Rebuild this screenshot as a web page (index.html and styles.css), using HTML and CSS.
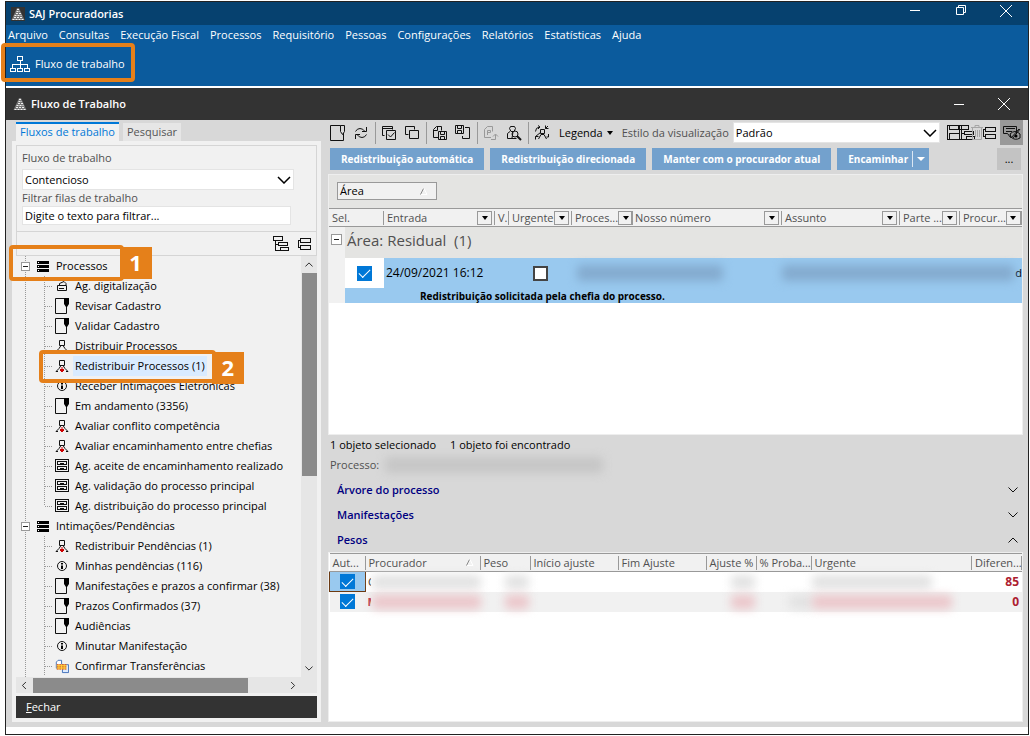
FILE: index.html
```html
<!DOCTYPE html>
<html lang="pt-BR">
<head>
<meta charset="utf-8">
<title>SAJ Procuradorias</title>
<link rel="stylesheet" href="styles.css">
</head>
<body>
<svg class="sprite" aria-hidden="true">
  <symbol id="logo" viewBox="0 0 14 14"><path fill="#333" d="M0 0h14v14H0z"/><path fill="#777" d="M6 1h2l5.500 12H.5z"/><path stroke="#f0f0f0" stroke-dasharray="2 1" d="M6 2.500h2M5.500 4.500h3.500M5 6.500h5M3.500 8.500h7M3 10.500h9M1.500 12.500h12"/></symbol>
  <symbol id="org" viewBox="0 0 20 17"><g fill="none" stroke="#fff" shape-rendering="crispEdges"><path d="M7.500.5h5v4h-5zM.5 12.500h5v3h-5zM7.500 12.500h5v3h-5zM14.500 12.500h5v3h-5zM10.500 5v7M2.500 12V8.500h15V12"/></g></symbol>
  <symbol id="doc" viewBox="0 0 16 16"><path fill="none" stroke="#111" d="M10.500.5h-10v15h13V8M10.500.5h4v6l-2 3-2-3z"/></symbol>
  <symbol id="refresh" viewBox="0 0 16 16"><path fill="none" stroke="#111" d="M2.500 6.500Q4 3.500 7 3.500q3 0 5 3M13.500 2v4.500H9M13.500 9.500Q12 12.500 9 12.500q-3 0-5-3M2.500 14V9.500H7"/></symbol>
  <symbol id="copycheck" viewBox="0 0 16 16"><path fill="none" stroke="#111" d="M3.500 10.500h-2v-9h10v3M5.500 5.500h9v9h-9zM1 3.500h10M7 9.500l2.500 2.500 4-4.500"/></symbol>
  <symbol id="copy" viewBox="0 0 16 16"><path fill="none" stroke="#111" d="M4.500 9.500h-3v-8h9v3M5.500 5.500h9v8h-9z"/></symbol>
  <symbol id="savedoc" viewBox="0 0 16 16"><path fill="none" stroke="#111" d="M6 12.500H1.500v-8l3-3h5v4M1.500 5.500h4v-4M6.500 6.500h8v8h-8zM8.500 6.500v3h4v-3M8.500 14.500v-3h4v3"/></symbol>
  <symbol id="savesplit" viewBox="0 0 16 16"><path fill="none" stroke="#111" d="M.5.500h8v8h-8zM2.500.500v3h4v-3M2.500 8.500v-3h4v3M10 2.500h4.500v11h-7V11"/></symbol>
  <symbol id="page" viewBox="0 0 16 16"><path fill="none" stroke="#999" d="M8 12.500H1.500v-8l3-3h5v5M4.500 10V5.500h3v2h-3M8 14.500h4.500v-5M10 11.500l2.500-2.500 2.500 2.500"/></symbol>
  <symbol id="finder" viewBox="0 0 16 16"><path fill="none" stroke="#111" d="M4.500 1.500h4l1 2-1.500 3h-3l-1.500-3zM4 6.500l-2.500 2v5h9M7 7l-1 6"/><circle cx="9" cy="9" r="3" fill="none" stroke="#111"/><path stroke="#111" stroke-width="2" d="M11 11l4 4"/></symbol>
  <symbol id="swap" viewBox="0 0 16 16"><path fill="none" stroke="#111" d="M1.500 6.500q0-4 4-4.500M4 .5l2 1.500-2 2M14.500 3.500h-3V.5M11.500 3.500L14 1M6.500 4.500h4v4h-4zM4.500 14l2.500-4.500h3l2.500 4.500M1.500 14.500v-3h3M1.500 11.500l5-4M14.500 9v3h-2"/></symbol>
  <symbol id="tree" viewBox="0 0 16 16"><path fill="none" stroke="#111" shape-rendering="crispEdges" d="M.5.500h9v4h-9zM2.500 5v9H7M2.500 8.500H5M5.500 6.500h9v3h-9zM7.500 11.500h8v3h-8z"/></symbol>
  <symbol id="collapse" viewBox="0 0 13 12"><path fill="none" stroke="#111" shape-rendering="crispEdges" d="M2.500.500h10v4h-10zM2.500 7.500h10v4h-10zM2 2.500H.5v7H2"/></symbol>
  <symbol id="panel" viewBox="0 0 16 16"><path fill="none" stroke="#111" shape-rendering="crispEdges" d="M.5.500h14v14H.5zM2.500.500v4h9V.5M2.500 14V8.500h10V14M12 .5V14"/></symbol>
  <symbol id="trash" viewBox="0 0 12 16"><path fill="none" stroke="#a5a5a5" d="M0 2.500h12M4 2V.5h4V2M1.500 3v11.500h9V3M4.500 5v7M6.500 5v7M8.500 5v7"/></symbol>
  <symbol id="comment" viewBox="0 0 18 16"><path fill="none" stroke="#111" d="M.5 1.500h13v7M.5 1.500v7h4l3 4v-3M3 3.500h9M3 6.500h6M7 9q5-5 10 0v4q-5 3-9-1zM8 13l8-9M17 4l-7 9"/><circle cx="13" cy="11" r="1.500"/></symbol>
  <symbol id="server" viewBox="0 0 12 11"><path fill="#000" d="M0 0h12v3H0zM0 4h12v3H0zM0 8h12v3H0z"/><path fill="#fff" d="M1 1h1v1H1zM1 5h1v1H1zM1 9h1v1H1z"/></symbol>
  <symbol id="scan" viewBox="0 0 14 16"><path fill="none" stroke="#111" d="M2.500 7.500v5h9v-5zM4.500 7V5.500L9 3.500l2 2V7M4 10.500h5"/></symbol>
  <symbol id="tag" viewBox="0 0 14 16"><path fill="none" stroke="#111" d="M9 .5H.5v15h11V9"/><path d="M9 0h5v6l-2 3h-1L9 6z"/></symbol>
  <symbol id="person" viewBox="0 0 14 16"><path fill="none" stroke="#111" d="M4.500 2.500h5v5h-5zM6 7.500l-2 3-3 3M8 7.500l2 3 3 3M1 13.500h2M11 13.500h2"/></symbol>
  <symbol id="personred" viewBox="0 0 14 16"><use href="#person"/><path fill="#c00" d="M6.500 9h1v2H9v2H8v1H6v-1H5v-2h1.500z"/></symbol>
  <symbol id="info" viewBox="0 0 14 16"><circle cx="7" cy="8" r="4.500" fill="none" stroke="#111"/><path d="M6 5h2v1.500H6zM6 7.500h2V11H6z"/></symbol>
  <symbol id="drawer" viewBox="0 0 14 16"><path fill="none" stroke="#111" shape-rendering="crispEdges" d="M.5 1.500h13v12H.5zM2.500 3.500h9v3h-9zM2.500 8.500h9v3h-9zM5 5.500h4M5 10.500h4"/></symbol>
  <symbol id="transfer" viewBox="0 0 16 16"><path fill="#fff" stroke="#3567b5" d="M1.500 3.500l2-2h4v9h-6z"/><path fill="#dceaff" stroke="#3567b5" d="M8.500 6.500h7v9h-7z"/><path fill="#ffd83a" d="M2 6h11v6H2z"/><path stroke="#c33" stroke-dasharray="2 1" d="M2 6.500h11M2 9h11M2 11.500h11"/></symbol>
  <symbol id="chevron" viewBox="0 0 14 8"><path fill="none" stroke="currentColor" stroke-width="1.500" d="M1 1l6 6 6-6"/></symbol>
  <symbol id="thin" viewBox="0 0 10 6"><path fill="none" stroke="currentColor" d="M.5.500L5 5 9.500.500"/></symbol>
  <symbol id="close" viewBox="0 0 12 12"><path stroke="#fff" d="M0 0l12 12M12 0L0 12"/></symbol>
  <symbol id="sort" viewBox="0 0 8 7"><path stroke="#888" d="M.5 6.500l3-6"/><path fill="none" stroke="#fff" d="M4 .5l3 6H1"/></symbol>
</svg>

<div class="app">
  <header class="titlebar">
    <svg class="logo"><use href="#logo"/></svg>
    <h1>SAJ Procuradorias</h1>
    <div class="winbtns">
      <button class="winbtn" aria-label="Minimizar"><span class="dash"></span></button>
      <button class="winbtn" aria-label="Restaurar"><svg width="11" height="11" viewBox="0 0 11 11"><path fill="none" stroke="#fff" d="M.5 2.500h7v7h-7zM2.500 2V.5h7v7H8"/></svg></button>
      <button class="winbtn" aria-label="Fechar"><svg width="12" height="12"><use href="#close"/></svg></button>
    </div>
  </header>
  <nav class="menu">
    <a href="#">Arquivo</a><a href="#">Consultas</a><a href="#">Execução Fiscal</a><a href="#">Processos</a><a href="#">Requisitório</a><a href="#">Pessoas</a><a href="#">Configurações</a><a href="#">Relatórios</a><a href="#">Estatísticas</a><a href="#">Ajuda</a>
  </nav>
  <div class="ribbon">
    <button class="flow callout-host"><svg width="20" height="17"><use href="#org"/></svg>Fluxo de trabalho<span class="callout wide"></span></button>
  </div>

  <section class="window">
    <header class="titlebar dark">
      <svg class="logo"><use href="#logo"/></svg>
      <h2>Fluxo de Trabalho</h2>
      <div class="winbtns">
        <button class="winbtn" aria-label="Minimizar"><span class="dash"></span></button>
        <button class="winbtn" aria-label="Fechar"><svg width="12" height="12"><use href="#close"/></svg></button>
      </div>
    </header>
    <div class="body">
      <aside class="side">
        <div class="tabs"><button class="tab active">Fluxos de trabalho</button><button class="tab">Pesquisar</button></div>
        <div class="sidebox">
          <form class="filters">
            <label class="first" for="fluxo">Fluxo de trabalho</label>
            <div class="combo"><select id="fluxo"><option>Contencioso</option></select><svg width="14" height="8"><use href="#chevron"/></svg></div>
            <label for="filtro">Filtrar filas de trabalho</label>
            <input id="filtro" type="text" value="Digite o texto para filtrar...">
          </form>
          <div class="treetools">
            <button aria-label="Expandir"><svg width="16" height="16"><use href="#tree"/></svg></button>
            <button aria-label="Recolher"><svg width="13" height="12"><use href="#collapse"/></svg></button>
          </div>
          <div class="treewrap">
            <ul class="tree">
              <li>
                <div class="node group callout-host"><button class="toggle" aria-label="Recolher Processos"></button><svg width="12" height="11"><use href="#server"/></svg><span>Processos</span><span class="callout one"><b>1</b></span></div>
                <ul class="children">
                  <li class="node"><svg width="14" height="16"><use href="#scan"/></svg><span>Ag. digitalização</span></li>
                  <li class="node"><svg width="14" height="16"><use href="#tag"/></svg><span>Revisar Cadastro</span></li>
                  <li class="node"><svg width="14" height="16"><use href="#tag"/></svg><span>Validar Cadastro</span></li>
                  <li class="node"><svg width="14" height="16"><use href="#person"/></svg><span>Distribuir Processos</span></li>
                  <li class="node callout-host"><svg width="14" height="16"><use href="#personred"/></svg><span class="selected">Redistribuir Processos (1)</span><span class="callout two"><b>2</b></span></li>
                  <li class="node"><svg width="14" height="16"><use href="#info"/></svg><span>Receber Intimações Eletrônicas</span></li>
                  <li class="node"><svg width="14" height="16"><use href="#tag"/></svg><span>Em andamento (3356)</span></li>
                  <li class="node"><svg width="14" height="16"><use href="#personred"/></svg><span>Avaliar conflito competência</span></li>
                  <li class="node"><svg width="14" height="16"><use href="#personred"/></svg><span>Avaliar encaminhamento entre chefias</span></li>
                  <li class="node"><svg width="14" height="16"><use href="#drawer"/></svg><span>Ag. aceite de encaminhamento realizado</span></li>
                  <li class="node"><svg width="14" height="16"><use href="#drawer"/></svg><span>Ag. validação do processo principal</span></li>
                  <li class="node"><svg width="14" height="16"><use href="#drawer"/></svg><span>Ag. distribuição do processo principal</span></li>
                </ul>
              </li>
              <li>
                <div class="node group"><button class="toggle" aria-label="Recolher Intimações"></button><svg width="12" height="11"><use href="#server"/></svg><span>Intimações/Pendências</span></div>
                <ul class="children open">
                  <li class="node"><svg width="14" height="16"><use href="#personred"/></svg><span>Redistribuir Pendências (1)</span></li>
                  <li class="node"><svg width="14" height="16"><use href="#info"/></svg><span>Minhas pendências (116)</span></li>
                  <li class="node"><svg width="14" height="16"><use href="#tag"/></svg><span>Manifestações e prazos a confirmar (38)</span></li>
                  <li class="node"><svg width="14" height="16"><use href="#tag"/></svg><span>Prazos Confirmados (37)</span></li>
                  <li class="node"><svg width="14" height="16"><use href="#tag"/></svg><span>Audiências</span></li>
                  <li class="node"><svg width="14" height="16"><use href="#info"/></svg><span>Minutar Manifestação</span></li>
                  <li class="node"><svg width="14" height="16"><use href="#transfer"/></svg><span>Confirmar Transferências</span></li>
                </ul>
              </li>
            </ul>
            <div class="vbar"><svg class="up" width="8" height="5"><use href="#thin"/></svg><span class="vthumb"></span><svg width="8" height="5"><use href="#thin"/></svg></div>
          </div>
          <div class="hbar"><svg class="left" width="8" height="5"><use href="#thin"/></svg><span class="hthumb"></span><svg class="right" width="8" height="5"><use href="#thin"/></svg></div>
          <button class="closebtn"><u>F</u>echar</button>
        </div>
      </aside>

      <main class="main">
        <div class="tools">
          <button aria-label="Abrir"><svg width="16" height="16"><use href="#doc"/></svg></button>
          <button aria-label="Atualizar"><svg width="16" height="16"><use href="#refresh"/></svg></button>
          <i class="sep"></i>
          <button aria-label="Marcar todos"><svg width="16" height="16"><use href="#copycheck"/></svg></button>
          <button aria-label="Desmarcar todos"><svg width="16" height="16"><use href="#copy"/></svg></button>
          <i class="sep"></i>
          <button aria-label="Salvar documento"><svg width="16" height="16"><use href="#savedoc"/></svg></button>
          <button aria-label="Salvar lista"><svg width="16" height="16"><use href="#savesplit"/></svg></button>
          <i class="sep"></i>
          <button aria-label="Peticionar"><svg width="16" height="16"><use href="#page"/></svg></button>
          <button aria-label="Consultar pessoa"><svg width="16" height="16"><use href="#finder"/></svg></button>
          <i class="sep"></i>
          <button aria-label="Trocar responsável"><svg width="16" height="16"><use href="#swap"/></svg></button>
          <button class="legend">Legenda<i class="caret"></i></button>
          <label for="estilo">Estilo da visualização</label>
          <div class="combo style"><select id="estilo"><option>Padrão</option></select><svg width="14" height="8"><use href="#chevron"/></svg></div>
          <div class="viewtools">
            <button aria-label="Painel"><svg width="16" height="16"><use href="#panel"/></svg></button>
            <button class="lap" aria-label="Expandir"><svg width="16" height="16"><use href="#tree"/></svg></button>
            <button class="lap" aria-label="Excluir"><svg width="12" height="16"><use href="#trash"/></svg></button>
            <button aria-label="Recolher"><svg width="13" height="12"><use href="#collapse"/></svg></button>
          </div>
          <button class="pressed" aria-label="Observações"><svg width="18" height="16"><use href="#comment"/></svg></button>
        </div>
        <div class="actions">
          <button class="action">Redistribuição automática</button>
          <button class="action">Redistribuição direcionada</button>
          <button class="action">Manter com o procurador atual</button>
          <button class="action split">Encaminhar<i class="bar"></i><i class="caret"></i></button>
          <button class="more" aria-label="Mais">...</button>
        </div>

        <div class="grid">
          <div class="groupby"><button class="chip">Área<svg width="8" height="7"><use href="#sort"/></svg></button></div>
          <table>
            <colgroup><col class="w54"><col class="w111"><col class="w14"><col class="w63"><col class="w60"><col class="wide-col"><col class="w118"><col class="w60"><col class="w61"></colgroup>
            <thead><tr>
              <th><div>Sel.</div></th>
              <th><div>Entrada<button aria-label="Filtrar"><i class="caret"></i></button></div></th>
              <th><div>V.</div></th>
              <th><div>Urgente<button aria-label="Filtrar"><i class="caret"></i></button></div></th>
              <th><div>Proces...<button aria-label="Filtrar"><i class="caret"></i></button></div></th>
              <th><div>Nosso número<button aria-label="Filtrar"><i class="caret"></i></button></div></th>
              <th><div>Assunto<button aria-label="Filtrar"><i class="caret"></i></button></div></th>
              <th><div>Parte ...<button aria-label="Filtrar"><i class="caret"></i></button></div></th>
              <th><div>Procur...<button aria-label="Filtrar"><i class="caret"></i></button></div></th>
            </tr></thead>
            <tbody>
              <tr class="grouprow"><td colspan="9"><div><button class="toggle big" aria-label="Recolher grupo"></button><span>Área: Residual&nbsp; (1)</span></div></td></tr>
              <tr class="sel">
                <td class="tick"><div><input type="checkbox" checked aria-label="Selecionar"></div></td>
                <td class="date">24/09/2021 16:12</td><td></td>
                <td class="urg"><input type="checkbox" aria-label="Urgente"></td>
                <td colspan="2"><span class="smudge blue s150"></span></td>
                <td colspan="3"><div class="masked"><span class="smudge blue"></span>d</div></td>
              </tr>
              <tr class="note"><td class="indent"><div></div></td><td colspan="8">Redistribuição solicitada pela chefia do processo.</td></tr>
            </tbody>
          </table>
        </div>

        <div class="status"><span>1 objeto selecionado</span><span>1 objeto foi encontrado</span></div>
        <div class="process">Processo:<span class="smudge grey"></span></div>
        <div class="sections">
          <button>Árvore do processo<svg width="10" height="6"><use href="#thin"/></svg></button>
          <button>Manifestações<svg width="10" height="6"><use href="#thin"/></svg></button>
          <button>Pesos<svg class="up" width="10" height="6"><use href="#thin"/></svg></button>
        </div>
        <div class="grid weights">
          <table>
            <colgroup><col class="w35"><col class="w115"><col class="w50"><col class="w88"><col class="w88"><col class="w50"><col class="w54"><col class="wide-col"><col class="w50"></colgroup>
            <thead><tr>
              <th><div>Aut...</div></th><th><div>Procurador<svg width="8" height="7"><use href="#sort"/></svg></div></th><th><div>Peso</div></th><th><div>Início ajuste</div></th><th><div>Fim Ajuste</div></th><th><div>Ajuste %</div></th><th><div>% Proba...</div></th><th><div>Urgente</div></th><th><div>Diferen...</div></th>
            </tr></thead>
            <tbody>
              <tr><td class="auto focus"><input type="checkbox" checked aria-label="Automático"></td><td><div class="masked"><span class="clip">C</span><span class="smudge pale"></span></div></td><td><span class="smudge pale mini"></span></td><td></td><td></td><td><span class="smudge pale mini"></span></td><td></td><td><span class="smudge pale s120"></span></td><td class="num">85</td></tr>
              <tr class="alt"><td class="auto"><input type="checkbox" checked aria-label="Automático"></td><td><div class="masked"><span class="clip red">M</span><span class="smudge rose"></span></div></td><td><span class="smudge rose mini"></span></td><td></td><td></td><td><span class="smudge rose mini"></span></td><td><span class="smudge pale mini end"></span></td><td><span class="smudge rose s140"></span></td><td class="num">0</td></tr>
            </tbody>
          </table>
        </div>
      </main>
    </div>
  </section>
</div>
</body>
</html>
```
FILE: styles.css
```css
* { box-sizing: border-box; }
body { margin: 0; background: #fff; color: #000; font: 11px/16px "Open Sans", "Noto Sans", sans-serif; }
button, select, input { font: inherit; color: inherit; border: 0; border-radius: 0; margin: 0; padding: 0; background: none; }
svg { flex: none; display: block; }
.sprite { position: absolute; width: 0; height: 0; }
ul { list-style: none; margin: 0; padding: 0; }
h1, h2 { margin: 0; font-size: 11px; font-weight: 600; color: #fff; }
i { flex: none; font-style: normal; }
a { color: inherit; text-decoration: none; }

.app { display: flex; flex-direction: column; min-height: calc(100vh - 2px); margin: 1px 1px 1px 5px; padding-bottom: 7px; border: 1px solid #222; }
.titlebar { display: flex; align-items: center; height: 23px; padding-left: 5px; background: #06416f; gap: 4px; }
.titlebar.dark { height: 32px; padding-left: 7px; background: #333; }
.logo { width: 14px; height: 14px; }
.winbtns { display: flex; margin-left: auto; padding-bottom: 6px; }
.dark .winbtns { padding: 0 2px 0 0; }
.winbtn { display: grid; place-items: center; width: 46px; height: 16px; }
.winbtns .winbtn:last-child { width: 44px; }
.dash { width: 10px; height: 1px; background: #fff; }
.menu { display: flex; gap: 11px; padding: 2px; background: #0b5b9d; color: #fff; white-space: nowrap; }
.ribbon { height: 41px; padding: 9px 4px; background: #0b5b9d; color: #fff; }
.flow { display: inline-flex; align-items: center; gap: 5px; height: 20px; }

.callout-host { position: relative; width: fit-content; }
.callout { position: absolute; z-index: 2; border: 4px solid #e5801a; border-radius: 4px; pointer-events: none; }
.callout.wide { inset: -11px -10px -8px -9px; }
.callout.one { inset: -11px -16px -5px -12px; }
.callout.two { inset: -6px -9px -7px -5px; }
.callout b { position: absolute; left: 100%; top: -2px; width: 32px; height: 32px; background: #e5801a; color: #fff; font-size: 22px; line-height: 30px; text-align: center; }

.window { display: flex; flex-direction: column; flex: 1; margin-top: 2px; }
.body { display: flex; flex: 1; background: #d8d8d8; padding: 0 5px 5px 6px; gap: 7px; }
.side { display: flex; flex-direction: column; flex: none; width: 309px; padding-top: 2px; }
.tabs { display: flex; align-items: flex-end; gap: 4px; height: 19px; padding-left: 4px; }
.tab { height: 18px; padding: 0 4px; background: #e6e6e6; color: #555; line-height: 16px; }
.tab.active { height: 19px; padding-bottom: 2px; border-top: 2px solid #0078d7; background: #f1f1f1; color: #0078d7; }
.sidebox { display: flex; flex-direction: column; flex: 1; padding: 4px; background: #f1f1f1; }
.filters { display: flex; flex-direction: column; align-items: flex-start; padding: 4px 5px 6px; border: 1px solid #d5d5d5; color: #505050; }
.filters .first { padding-bottom: 3px; }
.filters input { width: calc(100% - 20px); height: 19px; padding: 0 2px; border: 1px solid #e4e4e4; background: #fff; color: #000; }
.combo { display: grid; align-items: center; width: calc(100% - 17px); height: 21px; border: 1px solid #e4e4e4; background: #fff; color: #000; }
.combo select { grid-area: 1 / 1; width: 100%; height: 100%; padding: 0 2px; appearance: none; }
.combo svg { grid-area: 1 / 1; justify-self: end; margin-right: 2px; pointer-events: none; }
.treetools { display: flex; align-items: center; justify-content: flex-end; gap: 9px; height: 24px; padding-right: 5px; border: 1px solid #d5d5d5; border-top: 0; }
.treewrap { display: flex; flex: 1; padding-left: 5px; }
.tree { flex: 1; min-width: 0; padding-bottom: 1px; background: repeating-linear-gradient(#999 0 1px, transparent 1px 2px) 4px 0 / 1px 100% no-repeat; }
.node { display: flex; align-items: center; height: 20px; white-space: nowrap; }
.node.group { gap: 7px; }
.children { margin-left: 23px; background: repeating-linear-gradient(#999 0 1px, transparent 1px 2px) 0 0 / 1px calc(100% - 10px) no-repeat; }
.children.open { background-size: 1px 100%; }
.children .node { gap: 4px; padding-left: 1px; }
.children .node::before { content: ""; width: 8px; height: 1px; margin-right: -2px; background: repeating-linear-gradient(90deg, #999 0 1px, transparent 1px 2px); }
.children .node > span:not(.callout) { padding: 2px; }
.selected { background: #d9ebff; }
.toggle { flex: none; width: 9px; height: 9px; border: 1px solid #999; background: linear-gradient(#222, #222) center / 5px 1px no-repeat #fff; }
.toggle.big { width: 11px; height: 11px; }
.vbar { display: flex; flex-direction: column; align-items: center; flex: none; width: 16px; background: #e6e6e6; padding: 6px 0; }
.vthumb { width: 15px; height: 203px; margin: 6px 0 auto; background: #8b8b8b; }
.up { transform: rotate(180deg); }
.left { transform: rotate(90deg); }
.right { transform: rotate(-90deg); }
.hbar { display: flex; align-items: center; height: 16px; padding: 0 20px 0 4px; background: #e6e6e6; }
.hthumb { width: 215px; height: 15px; margin: 0 auto 0 5px; background: #8b8b8b; }
.closebtn { height: 22px; margin-top: 3px; padding-left: 10px; background: #333; color: #fff; text-align: left; }

.main { display: flex; flex-direction: column; flex: 1; min-width: 0; }
.tools { display: flex; align-items: center; height: 25px; padding-left: 2px; gap: 7px; white-space: nowrap; }
.tools label { color: #505050; }
.sep { width: 1px; height: 22px; background: #999; }
.tools .sep { margin: 0 -2px 0 -1px; }
.caret { width: 0; height: 0; border: 3px solid transparent; border-top: 4px solid currentColor; border-bottom: 0; }
.legend { display: flex; align-items: center; gap: 4px; margin: 0 2px; }
.combo.style { flex: 1; min-width: 60px; width: auto; margin-left: -3px; }
.viewtools { display: flex; align-items: center; width: 46px; }
.viewtools .lap { margin-left: -4px; }
.pressed { display: grid; place-items: center; align-self: stretch; width: 23px; background: #999; }
.actions { display: flex; gap: 6px; padding: 3px 2px 4px; }
.action { height: 22px; padding: 0 11px; background: #73a1cd; color: #fff; font-size: 10px; font-weight: 700; white-space: nowrap; }
.split { display: flex; align-items: center; gap: 4px; padding-right: 4px; }
.split .bar { width: 1px; height: 16px; background: #dbe7f3; }
.split .caret { border-width: 4px 4px 0; }
.more { width: 24px; margin-left: auto; background: #c3c3c3; }

.grid { flex: none; height: 261px; background: #fff; border: 1px solid #eee; }
.groupby { height: 33px; padding: 7px 8px; background: #e4e4e2; }
.chip { display: flex; align-items: center; justify-content: space-between; width: 100px; height: 18px; padding: 0 8px 0 2px; border: 1px solid #999; background: #f1f1f1; }
table { width: 100%; table-layout: fixed; border-collapse: collapse; }
.w14 { width: 14px; } .w35 { width: 36px; } .w50 { width: 50px; } .w54 { width: 55px; } .w60 { width: 60px; } .w61 { width: 62px; } .w63 { width: 63px; } .w88 { width: 88px; } .w111 { width: 111px; } .w115 { width: 115px; } .w118 { width: 118px; }
th, td { padding: 0; font-weight: 400; text-align: left; white-space: nowrap; }
th { height: 18px; border: solid #999; border-width: 1px 0; background: #f1f1f1; color: #505050; }
th div { display: flex; align-items: center; justify-content: space-between; height: 14px; padding: 0 2px 0 3px; border-right: 1px solid #999; }
th svg { margin-right: 4px; }
th button { display: grid; place-items: center; flex: none; width: 15px; height: 14px; border: 1px solid #999; }
th .caret { color: #000; }
.grouprow div { display: flex; align-items: center; height: 31px; padding: 0 0 6px 2px; gap: 5px; background: linear-gradient(90deg, #f1f1f1 16px, #e4e4e2 16px); color: #505050; font-size: 15px; line-height: 24px; }
.sel, .note { background: #99c9ef; }
.sel td { height: 30px; }
.tick { background: #f1f1f1; }
.tick div { display: grid; place-items: center; height: 30px; margin-left: 16px; background: #fff; }
.date { padding-left: 2px; font-size: 12px; }
.urg { padding-left: 24px; }
input[type="checkbox"] { display: grid; place-items: center; width: 15px; height: 15px; appearance: none; border: 2px solid #444; background: #fff; }
input[type="checkbox"]:checked { border: 0; background: #0078d7; }
input[type="checkbox"]:checked::after { content: ""; width: 10px; height: 5px; border: solid #fff; border-width: 0 0 1px 1px; transform: translateY(-1px) rotate(-45deg); }
.note td { height: 15px; padding-left: 36px; font-size: 10px; font-weight: 700; line-height: 14px; }
.note .indent { padding: 0; }
.indent div { width: 16px; height: 15px; background: #f1f1f1; }
.smudge { display: block; flex: 1; height: 16px; border-radius: 4px; filter: blur(5px); }
.blue { background: #84abcf; }
.grey { flex: none; width: 218px; background: #c6c6c6; }
.pale { height: 14px; background: #e2e2e2; }
.rose { height: 14px; background: #ebc6ca; }
.s120 { width: 120px; } .s140 { width: 140px; } .s150 { width: 146px; margin-left: 5px; }
.mini { width: 24px; margin-left: 24px; }
.mini.end { margin-left: 32px; }
.masked { display: flex; align-items: center; gap: 1px; }
.clip { width: 3px; overflow: hidden; }

.status { display: flex; gap: 14px; padding: 2px 2px; }
.process { display: flex; align-items: center; gap: 6px; padding: 2px; color: #505050; }
.sections { display: grid; gap: 1px; padding: 3px 5px 0 9px; }
.sections button { display: flex; align-items: center; justify-content: space-between; width: 100%; height: 24px; color: #000080; font-weight: 600; }
.sections svg { color: #111; }
.weights { flex: 1; height: auto; }
.weights td { height: 20px; }
.weights .masked { padding-left: 2px; }
.auto input { margin: 0 auto; }
.focus { background: #99c9ef; border: 1px solid #6b3a12; }
.alt { background: #f1f1f1; }
.red, .num { color: #ad2030; font-weight: 700; }
.num { padding-right: 3px; font-size: 12px; text-align: right; }
```
